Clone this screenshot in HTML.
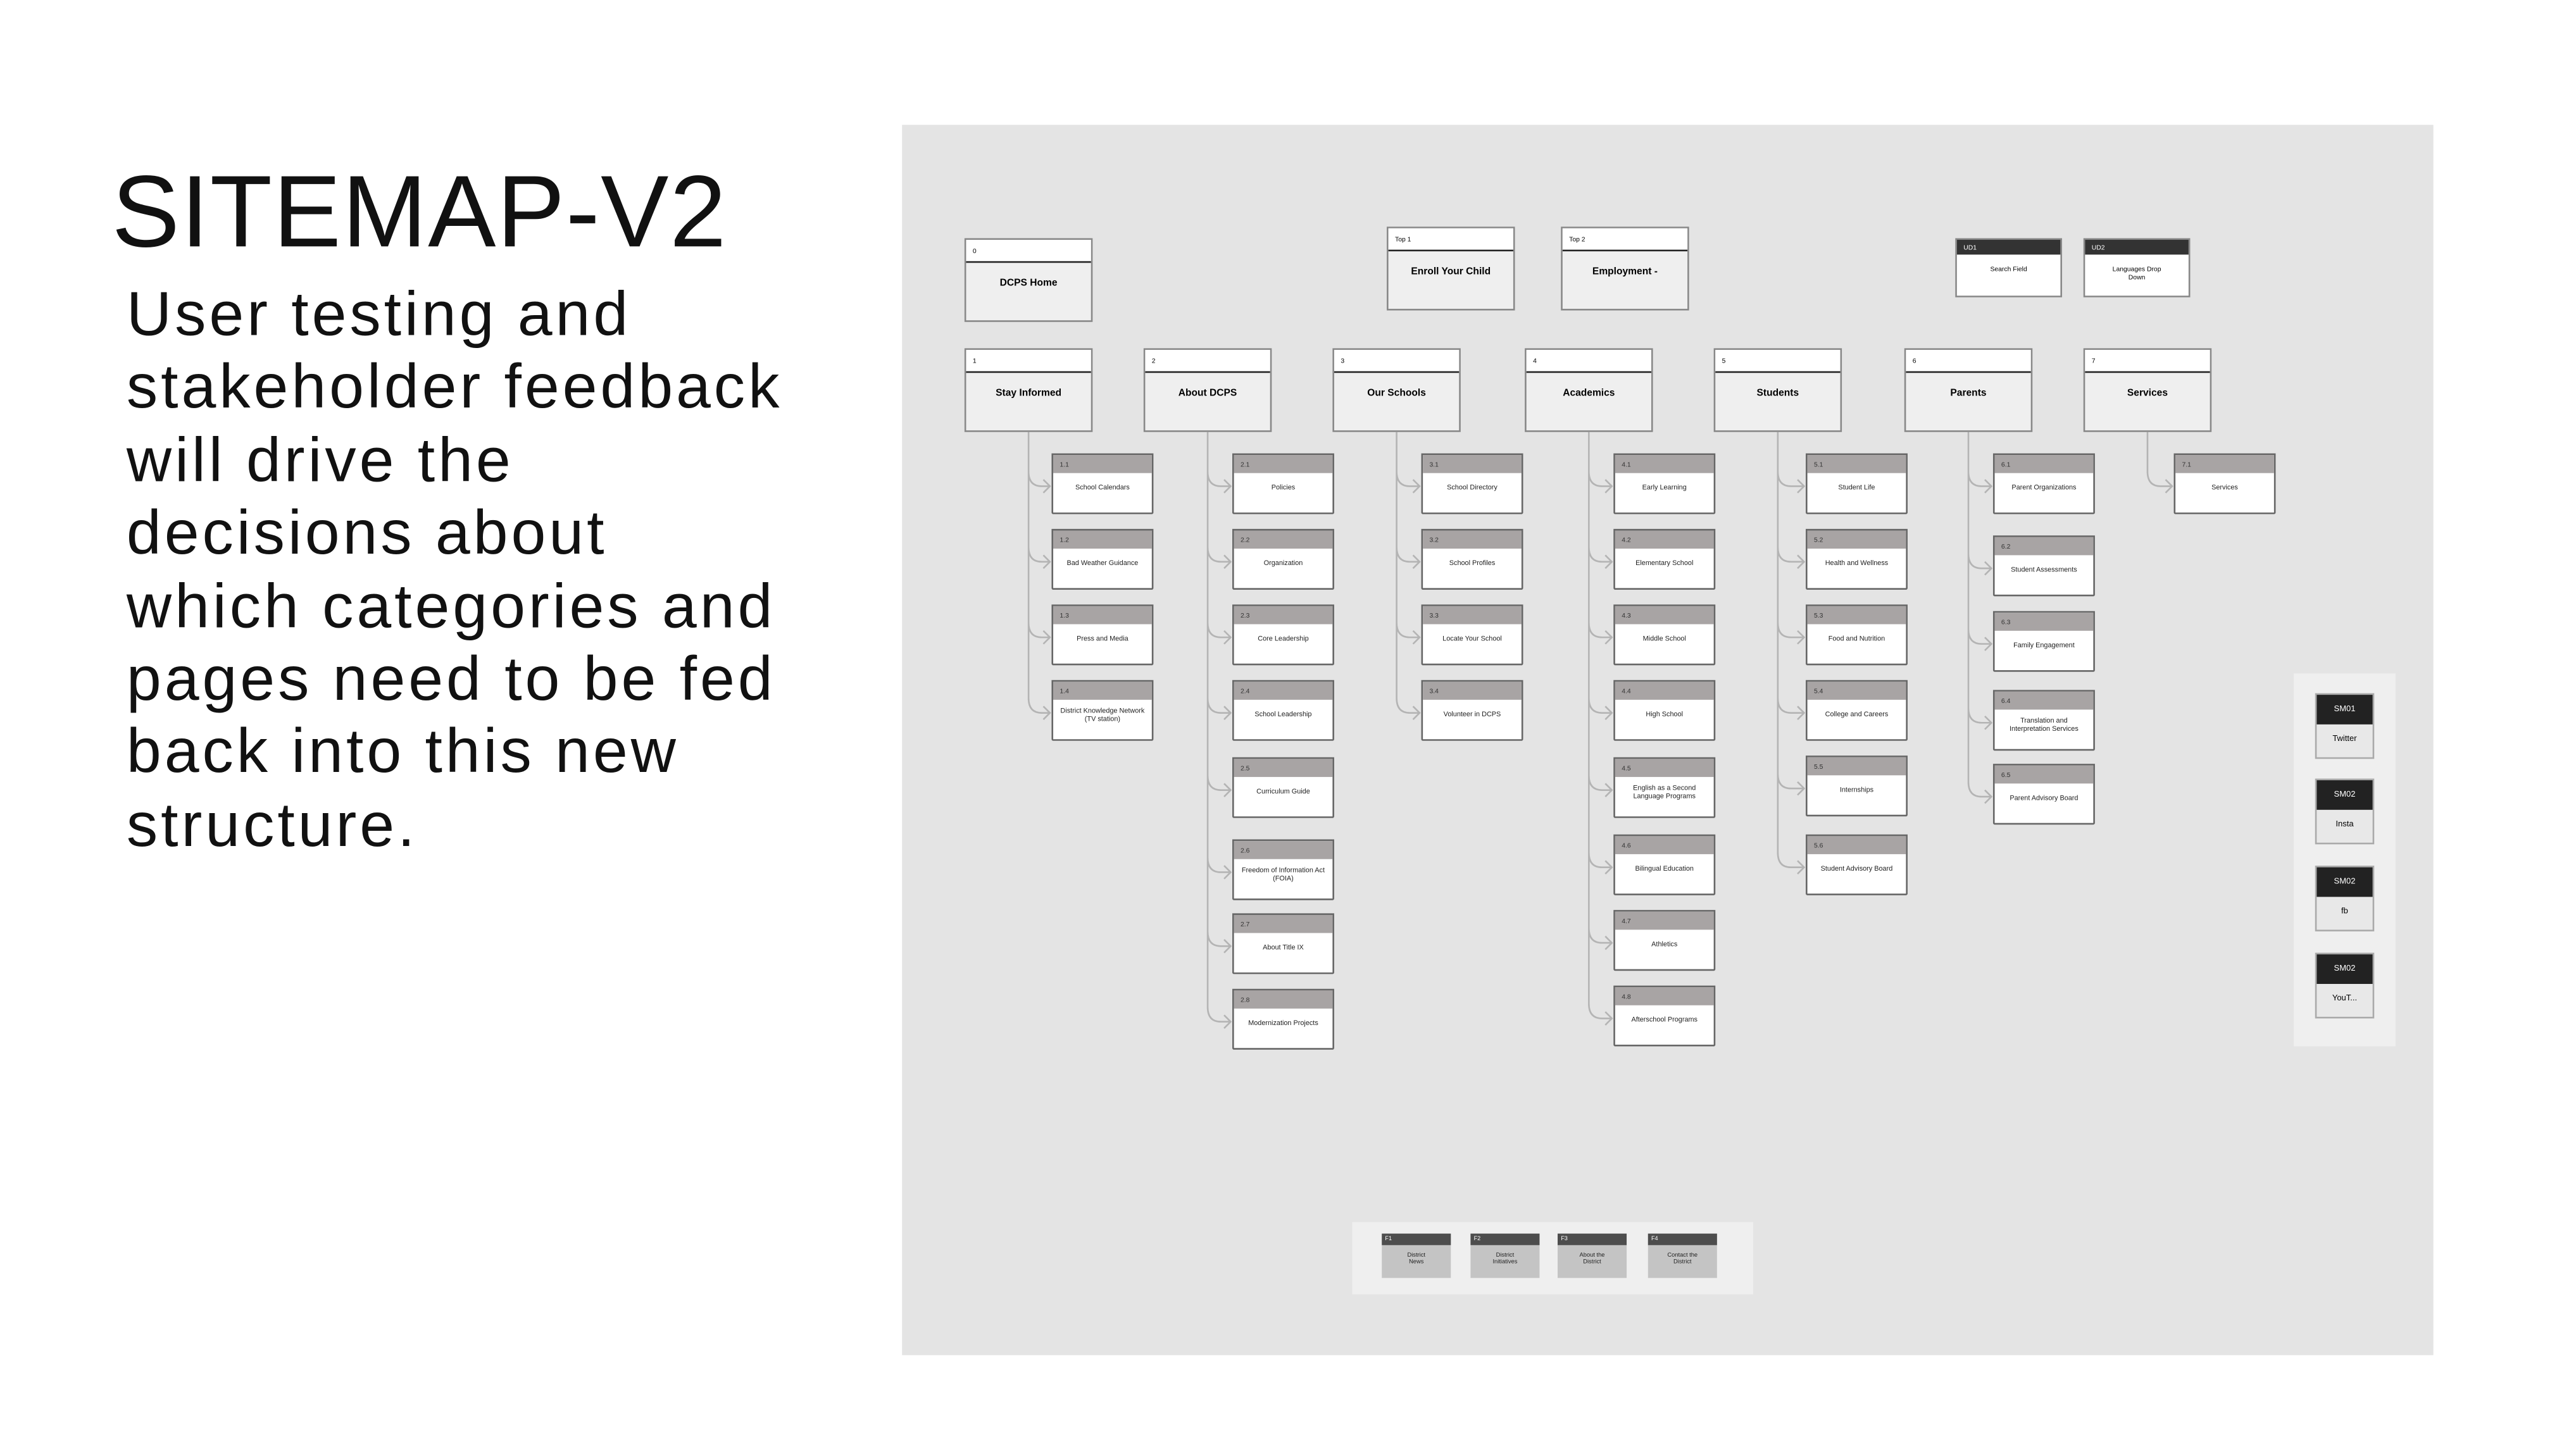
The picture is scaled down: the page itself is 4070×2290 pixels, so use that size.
<!DOCTYPE html>
<html><head><meta charset="utf-8"><style>
html,body{margin:0;padding:0;background:#fff;overflow:hidden}
#root{position:absolute;left:0;top:0;width:1560px;height:878px;transform:scale(2.596);transform-origin:0 0;font-family:"Liberation Sans",sans-serif}
.a{position:absolute}
h1{position:absolute;left:68px;top:97px;margin:0;font-weight:normal;font-size:62px;line-height:66px;letter-spacing:.6px;color:#111}
.p{position:absolute;left:77px;top:170px;font-size:38px;line-height:44.4px;letter-spacing:1.9px;color:#111;white-space:nowrap}
.panel{position:absolute;left:549px;top:76px;width:932px;height:749px;background:#e4e4e4}
.b{position:absolute;box-sizing:border-box;border:.5px solid #888;background:#efefef;width:78px;height:51px}
.b .h{height:14px;background:#fff;border-bottom:.8px solid #222;font-size:4px;padding:4px 0 0 4px;box-sizing:border-box}
.b .t{text-align:center;font-size:6px;font-weight:bold;margin-top:10px}
.c{position:absolute;box-sizing:border-box;border:.5px solid #666;background:#fff;width:62px;height:37px;border-radius:0 0 1px 1px}
.c .h{height:11px;background:#a8a4a4;font-size:4px;padding:3px 0 0 4px;box-sizing:border-box;color:#333}
.c .t{text-align:center;font-size:4.2px;margin-top:6px;line-height:5px;padding:0 3px;color:#222}
.u{position:absolute;box-sizing:border-box;border:.5px solid #888;background:#fff;width:65px;height:36px}
.u .h{height:9px;background:#333;color:#fff;font-size:4px;padding:2px 0 0 4px;box-sizing:border-box}
.u .t{text-align:center;font-size:4px;margin-top:7px;line-height:4.5px;padding:0 12px}
.s{position:absolute;box-sizing:border-box;border:.5px solid #aaa;background:#e8e8e8;width:36px;height:40px;left:1409px}
.s .h{height:18px;background:#222;color:#fff;font-size:5px;text-align:center;line-height:18px}
.s .t{text-align:center;font-size:5px;margin-top:6px}
.f{position:absolute;top:751px;width:42px;height:27px;background:#c4c4c4}
.f .h{height:7px;background:#4d4d4d;color:#fff;font-size:3.5px;padding:1px 0 0 2px;box-sizing:border-box}
.f .t{text-align:center;font-size:3.6px;line-height:4.4px;margin-top:4px;color:#222}
</style></head><body><div id="root">
<h1>SITEMAP-V2</h1>
<div class="p">User testing and<br>stakeholder feedback<br>will drive the<br>decisions about<br>which categories and<br>pages need to be fed<br>back into this new<br>structure.</div>
<div class="panel"></div>
<svg class="a" style="left:0;top:0" width="1560" height="878" id="lines"></svg>

<div class="b" style="left:587px;top:145px"><div class="h">0</div><div class="t">DCPS Home</div></div>
<div class="b" style="left:844px;top:138px"><div class="h">Top 1</div><div class="t">Enroll Your Child</div></div>
<div class="b" style="left:950px;top:138px"><div class="h">Top 2</div><div class="t">Employment -</div></div>
<div class="u" style="left:1190px;top:145px"><div class="h">UD1</div><div class="t">Search Field</div></div>
<div class="u" style="left:1268px;top:145px"><div class="h">UD2</div><div class="t">Languages Drop Down</div></div>

<div class="b" style="left:587px;top:212px"><div class="h">1</div><div class="t">Stay Informed</div></div>
<div class="b" style="left:696px;top:212px"><div class="h">2</div><div class="t">About DCPS</div></div>
<div class="b" style="left:811px;top:212px"><div class="h">3</div><div class="t">Our Schools</div></div>
<div class="b" style="left:928px;top:212px"><div class="h">4</div><div class="t">Academics</div></div>
<div class="b" style="left:1043px;top:212px"><div class="h">5</div><div class="t">Students</div></div>
<div class="b" style="left:1159px;top:212px"><div class="h">6</div><div class="t">Parents</div></div>
<div class="b" style="left:1268px;top:212px"><div class="h">7</div><div class="t">Services</div></div>

<div class="c" style="left:640px;top:276px"><div class="h">1.1</div><div class="t">School Calendars</div></div>
<div class="c" style="left:640px;top:322px"><div class="h">1.2</div><div class="t">Bad Weather Guidance</div></div>
<div class="c" style="left:640px;top:368px"><div class="h">1.3</div><div class="t">Press and Media</div></div>
<div class="c" style="left:640px;top:414px"><div class="h">1.4</div><div class="t" style="margin-top:4px">District Knowledge Network (TV station)</div></div>

<div class="c" style="left:750px;top:276px"><div class="h">2.1</div><div class="t">Policies</div></div>
<div class="c" style="left:750px;top:322px"><div class="h">2.2</div><div class="t">Organization</div></div>
<div class="c" style="left:750px;top:368px"><div class="h">2.3</div><div class="t">Core Leadership</div></div>
<div class="c" style="left:750px;top:414px"><div class="h">2.4</div><div class="t">School Leadership</div></div>
<div class="c" style="left:750px;top:461px"><div class="h">2.5</div><div class="t">Curriculum Guide</div></div>
<div class="c" style="left:750px;top:511px"><div class="h">2.6</div><div class="t" style="margin-top:4px">Freedom of Information Act (FOIA)</div></div>
<div class="c" style="left:750px;top:556px"><div class="h">2.7</div><div class="t">About Title IX</div></div>
<div class="c" style="left:750px;top:602px"><div class="h">2.8</div><div class="t">Modernization Projects</div></div>

<div class="c" style="left:865px;top:276px"><div class="h">3.1</div><div class="t">School Directory</div></div>
<div class="c" style="left:865px;top:322px"><div class="h">3.2</div><div class="t">School Profiles</div></div>
<div class="c" style="left:865px;top:368px"><div class="h">3.3</div><div class="t">Locate Your School</div></div>
<div class="c" style="left:865px;top:414px"><div class="h">3.4</div><div class="t">Volunteer in DCPS</div></div>

<div class="c" style="left:982px;top:276px"><div class="h">4.1</div><div class="t">Early Learning</div></div>
<div class="c" style="left:982px;top:322px"><div class="h">4.2</div><div class="t">Elementary School</div></div>
<div class="c" style="left:982px;top:368px"><div class="h">4.3</div><div class="t">Middle School</div></div>
<div class="c" style="left:982px;top:414px"><div class="h">4.4</div><div class="t">High School</div></div>
<div class="c" style="left:982px;top:461px"><div class="h">4.5</div><div class="t" style="margin-top:4px">English as a Second Language Programs</div></div>
<div class="c" style="left:982px;top:508px"><div class="h">4.6</div><div class="t">Bilingual Education</div></div>
<div class="c" style="left:982px;top:554px"><div class="h">4.7</div><div class="t">Athletics</div></div>
<div class="c" style="left:982px;top:600px"><div class="h">4.8</div><div class="t">Afterschool Programs</div></div>

<div class="c" style="left:1099px;top:276px"><div class="h">5.1</div><div class="t">Student Life</div></div>
<div class="c" style="left:1099px;top:322px"><div class="h">5.2</div><div class="t">Health and Wellness</div></div>
<div class="c" style="left:1099px;top:368px"><div class="h">5.3</div><div class="t">Food and Nutrition</div></div>
<div class="c" style="left:1099px;top:414px"><div class="h">5.4</div><div class="t">College and Careers</div></div>
<div class="c" style="left:1099px;top:460px"><div class="h">5.5</div><div class="t">Internships</div></div>
<div class="c" style="left:1099px;top:508px"><div class="h">5.6</div><div class="t">Student Advisory Board</div></div>

<div class="c" style="left:1213px;top:276px"><div class="h">6.1</div><div class="t">Parent Organizations</div></div>
<div class="c" style="left:1213px;top:326px"><div class="h">6.2</div><div class="t">Student Assessments</div></div>
<div class="c" style="left:1213px;top:372px"><div class="h">6.3</div><div class="t">Family Engagement</div></div>
<div class="c" style="left:1213px;top:420px"><div class="h">6.4</div><div class="t" style="margin-top:4px">Translation and Interpretation Services</div></div>
<div class="c" style="left:1213px;top:465px"><div class="h">6.5</div><div class="t">Parent Advisory Board</div></div>

<div class="c" style="left:1323px;top:276px"><div class="h">7.1</div><div class="t">Services</div></div>

<div class="a" style="left:1396px;top:410px;width:62px;height:227px;background:#efefef"></div>
<div class="s" style="top:422px"><div class="h">SM01</div><div class="t">Twitter</div></div>
<div class="s" style="top:474px"><div class="h">SM02</div><div class="t">Insta</div></div>
<div class="s" style="top:527px"><div class="h">SM02</div><div class="t">fb</div></div>
<div class="s" style="top:580px"><div class="h">SM02</div><div class="t">YouT...</div></div>

<div class="a" style="left:823px;top:744px;width:244px;height:44px;background:#efefef"></div>
<div class="f" style="left:841px"><div class="h">F1</div><div class="t">District<br>News</div></div>
<div class="f" style="left:895px"><div class="h">F2</div><div class="t">District<br>Initiatives</div></div>
<div class="f" style="left:948px"><div class="h">F3</div><div class="t">About the<br>District</div></div>
<div class="f" style="left:1003px"><div class="h">F4</div><div class="t">Contact the<br>District</div></div>
</div>
<script>
var cols=[[626,640,[276,322,368,414]],[735,750,[276,322,368,414,461,511,556,602]],[850,865,[276,322,368,414]],[967,982,[276,322,368,414,461,508,554,600]],[1082,1099,[276,322,368,414,460,508]],[1198,1213,[276,326,372,420,465]],[1307,1323,[276]]];
var d="";
cols.forEach(function(c){var cx=c[0],lx=c[1],ys=c[2];var last=ys[ys.length-1]+20;
d+="M"+cx+" 263 L"+cx+" "+(last-8)+" ";
ys.forEach(function(t){var y=t+20;d+="M"+cx+" "+(y-9)+" Q"+cx+" "+y+" "+(cx+8)+" "+y+" L"+(lx-1)+" "+y+" M"+(lx-5)+" "+(y-4)+" L"+(lx-1)+" "+y+" L"+(lx-5)+" "+(y+4)+" ";});});
document.getElementById("lines").innerHTML='<path d="'+d+'" fill="none" stroke="#b4b4b4" stroke-width="1"/>';
</script>
</body></html>
